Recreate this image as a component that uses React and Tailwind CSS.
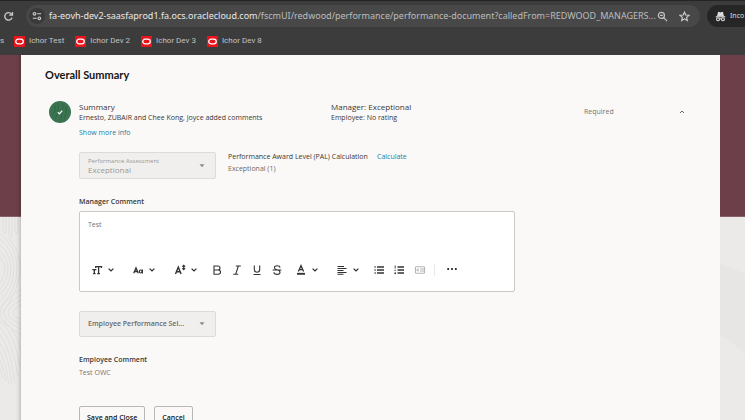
import React from "react";

const bookmarks = ["Ichor Test", "Ichor Dev 2", "Ichor Dev 3", "Ichor Dev 8"];

function OracleMark() {
  return (
    <svg viewBox="0 0 10 10" className="size-[11px]" aria-hidden="true">
      <rect width="10" height="10" fill="#e8141c" />
      <rect x="1.6" y="2.9" width="6.8" height="4.2" rx="2.1" fill="none" stroke="#fff" strokeWidth="1.2" />
    </svg>
  );
}

function BrowserBar() {
  return (
    <header className="shrink-0 bg-[#3c3c3c] border-t border-[#242424] h-[55px] overflow-hidden">
      <div className="flex items-center pt-1 h-[26px] font-['Noto_Sans','Open_Sans',sans-serif]">
        <button aria-label="Reload" className="ml-[3px] mr-3 size-[11px] shrink-0">
          <svg viewBox="0 0 12 12" className="size-[11px]" fill="none" stroke="#c9c9c9" strokeWidth="1.5">
            <path d="M9.9 7.2A4.1 4.1 0 1 1 9.3 3.4" />
            <path d="M10.3 1v3.4H6.9" />
          </svg>
        </button>
        <div className="flex h-[22px] flex-1 min-w-0 items-center rounded-full bg-[#484848] pl-[3px] pr-[10px]">
          <button aria-label="Site information" className="flex size-4 shrink-0 items-center justify-center rounded-full bg-[#3a3a3a]">
            <svg viewBox="0 0 12 12" className="size-[10px]" fill="none" stroke="#d0d0d0" strokeWidth="1.3">
              <circle cx="3" cy="3.3" r="1.6" />
              <path d="M6.2 3.3H11M1 8.7h4.6" />
              <circle cx="8.8" cy="8.7" r="1.6" />
            </svg>
          </button>
          <p className="ml-1 flex-1 min-w-0 whitespace-nowrap text-[9px] leading-4 text-[#bdbdbd]">
            <span className="text-[#e8e8e8]">fa-eovh-dev2-saasfaprod1.fa.ocs.oraclecloud.com</span>
            /fscmUI/redwood/performance/performance-document?calledFrom=REDWOOD_MANAGERS...
          </p>
          <button aria-label="Zoom" className="ml-2 shrink-0">
            <svg viewBox="0 0 12 12" className="size-[11px] block" fill="none" stroke="#c4c4c4" strokeWidth="1.3">
              <circle cx="4.8" cy="4.8" r="3.3" />
              <path d="M7.3 7.3l3.7 3.7M3.3 4.8h3" />
            </svg>
          </button>
          <button aria-label="Bookmark this page" className="ml-[11px] shrink-0">
            <svg viewBox="0 0 12 12" className="size-[11px] block" fill="none" stroke="#d0d0d0" strokeWidth="1.2">
              <path d="M6 1.2l1.4 3.2 3.5.3-2.6 2.3.8 3.4L6 8.6l-3.1 1.8.8-3.4L1.1 4.7l3.5-.3z" />
            </svg>
          </button>
        </div>
        <button className="ml-[7px] flex h-[22px] w-[38px] shrink-0 items-center gap-1 rounded-l-full bg-[#262626] pl-2 text-[7px] text-[#dedede]">
          <svg viewBox="0 0 12 12" className="size-[11px] shrink-0" fill="none" stroke="#e0e0e0" strokeWidth="1.2">
            <path d="M3 5.2l.8-3.6 2.2.5 2.2-.5.8 3.6z" fill="#e0e0e0" />
            <path d="M.8 6.3h10.4" />
            <circle cx="3.3" cy="9" r="1.6" />
            <circle cx="8.7" cy="9" r="1.6" />
            <path d="M4.9 8.8q1.1-.7 2.2 0" />
          </svg>
          Inco
        </button>
      </div>
      <nav className="flex h-[28px] items-center gap-[11px] font-['Roboto','Open_Sans',sans-serif] text-[8px] text-[#c2c2c2]">
        <span className="w-[3px]">s</span>
        {bookmarks.map((b) => (
          <a key={b} href="#" className="flex items-center gap-1 whitespace-nowrap">
            <OracleMark />
            {b}
          </a>
        ))}
      </nav>
    </header>
  );
}

function Side({ children }) {
  return (
    <div className="flex flex-col">
      <div className="h-[162px] border-b border-[#8a6169] bg-[#6d3f49]" />
      <div className="flex-1 bg-[#ebeae8]">{children}</div>
    </div>
  );
}

function Chevron() {
  return (
    <svg viewBox="0 0 6 4" className="h-1 w-[6px]" fill="none" stroke="#2c2c2c" strokeWidth="1.2">
      <path d="M.6.6L3 3 5.4.6" />
    </svg>
  );
}

function Tool({ label, menu, className = "", children }) {
  return (
    <button aria-label={label} className={"flex items-center gap-[5px] " + className}>
      <svg viewBox="0 0 12 12" className="size-3" fill="none" stroke="#333" strokeWidth="1.1">
        {children}
      </svg>
      {menu && <Chevron />}
    </button>
  );
}

function Toolbar() {
  return (
    <div role="toolbar" aria-label="Formatting" className="flex h-3 items-center pl-[11px]">
      <Tool label="Font size" menu>
        <path d="M4.400 2.600h6.400M7.600 2.600v7.200M6.200 9.700H9M4.700 2v2M10.500 2v2" strokeWidth="1.300" />
        <path d="M1.300 5.700h4M3.300 5.700v4M2.100 9.700h2.400" strokeWidth="1.300" />
      </Tool>
      <Tool label="Font" menu className="ml-[18px]">
        <path d="M1.700 9.300L4 3.900l2.300 5.400M2.600 7.500h2.800" strokeWidth="1.300" />
        <ellipse cx="8.700" cy="7.500" rx="1.400" ry="1.500" strokeWidth="1.200" />
        <path d="M10.400 5.600v3.800" strokeWidth="1.200" />
      </Tool>
      <Tool label="Superscript and subscript" menu className="ml-[19px]">
        <path d="M1.500 10L4.300 3.200 7.100 10M2.400 7.700h3.800" strokeWidth="1.400" />
        <path d="M9.700 1.200v4.400M8.300 2.600l1.400-1.400 1.400 1.400M8.300 4.200l1.400 1.400 1.400-1.400" />
      </Tool>
      <Tool label="Bold" className="ml-[14px]">
        <path d="M3 2h4a2 2 0 0 1 0 4H3zM3 6h4.400a2.100 2.100 0 0 1 0 4.200H3z" />
      </Tool>
      <Tool label="Italic" className="ml-2">
        <path d="M4.800 2h5M2.200 10.200h5M7.400 2L4.700 10.200" />
      </Tool>
      <Tool label="Underline" className="ml-2">
        <path d="M3.300 1.500v4a2.700 2.700 0 0 0 5.400 0v-4M2.500 10.500h7" />
      </Tool>
      <Tool label="Strikethrough" className="ml-2">
        <path d="M9 3.600C8.700 1.200 3.300 1.200 3.400 3.700c.1 1.300 1.300 1.700 2.600 2 1.600.4 3 .9 3 2.500 0 2.900-5.800 2.900-6.100 0M1.600 6h8.800" />
      </Tool>
      <Tool label="Text colour" menu className="ml-3">
        <path d="M3.400 7.500L6 1.700l2.600 5.800M4.300 5.700h3.400" strokeWidth="1.300" />
        <path d="M2 9.800h8" strokeWidth="1.900" />
      </Tool>
      <Tool label="Align" menu className="ml-[18px]">
        <path d="M1.500 2.500h6.500M1.500 4.500h9M1.500 6.500h6M1.500 8.500h9M1.500 10.300h6" />
      </Tool>
      <Tool label="Bulleted list" className="ml-[14px]">
        <path d="M1.500 3h1.200M4 3h7M1.500 6h1.200M4 6h7M1.500 9h1.200M4 9h7" strokeWidth="1.300" />
      </Tool>
      <Tool label="Numbered list" className="ml-2">
        <path d="M4.500 3H11M4.500 6H11M4.500 9H11" strokeWidth="1.300" />
        <path d="M2.200 1.500v3M1.400 6.300h1.500M1.400 9.500h1.500M2.200 8v2.200" strokeWidth=".9" />
      </Tool>
      <Tool label="Decrease indent" className="ml-[9px]">
        <path d="M1.500 2.800h9M6 5h4.500M6 7h4.500M1.500 9.200h9M1.500 2.800v6.400M10.500 2.800v6.400M4.800 4.600L3 6l1.800 1.400" stroke="#b5b5b5" />
      </Tool>
      <span className="ml-2 h-3 w-px bg-[#e8e8e8]" />
      <Tool label="More" className="ml-[11px]">
        <path d="M1.300 5h1.800M5.100 5h1.800M8.900 5h1.800" strokeWidth="1.800" />
      </Tool>
    </div>
  );
}

function Caret() {
  return (
    <svg viewBox="0 0 6 4" className="h-1 w-[6px] shrink-0" aria-hidden="true">
      <path d="M.5.3h5L3 3.300z" fill="#8a8a8a" />
    </svg>
  );
}

function Panel() {
  return (
    <main className="flex-1 min-w-0 bg-[#fbf9f8] px-6 pt-3 shadow-[0_0_5px_rgba(0,0,0,0.35)] text-[7px] leading-[10px] text-[#3a3734]">
      <h1 className="font-['Lato','Open_Sans',sans-serif] text-[11px] leading-4 font-bold text-[#161513]">Overall Summary</h1>

      <section className="mt-[18px] flex items-center pl-1">
        <span className="flex size-[22px] items-center justify-center rounded-full bg-[#3a7450]">
          <svg viewBox="0 0 22 22" className="size-[22px]" fill="none">
            <path d="M3 15Q7 10 6 4M6 18Q10 12 9 2M11 20Q14 13 14 2M15 19Q18 12 17 5" stroke="#2f6343" strokeWidth=".8" />
            <path d="M8.800 11.200l1.600 1.600 2.900-3.200" stroke="#fff" strokeWidth="1.200" />
          </svg>
        </span>
        <div className="ml-2 w-[252px]">
          <h2 className="text-[8px] leading-3">Summary</h2>
          <p>Ernesto, ZUBAIR and Chee Kong, Joyce added comments</p>
        </div>
        <div className="flex-1">
          <p className="text-[8px] leading-3">Manager: Exceptional</p>
          <p>Employee: No rating</p>
        </div>
        <span className="w-[95px] text-[#77736f]">Required</span>
        <button aria-label="Collapse" className="mr-[11px]">
          <svg viewBox="0 0 6 4" className="block h-1 w-[6px]" fill="none" stroke="#6b6865">
            <path d="M1 3l2-2 2 2" />
          </svg>
        </button>
      </section>

      <div className="pl-[34px]">
        <a href="#" className="mt-[5px] block w-fit text-[#227e9e]">Show more info</a>

        <div className="mt-[14px] flex">
          <div className="flex h-[27px] w-[137px] items-center rounded-[2px] border border-[#dddbd9] bg-[#f0efed] pl-2 pr-[10px] text-[#9b9895]">
            <div className="flex-1">
              <label htmlFor="assessment" className="block text-[6px] leading-2">Performance Assessment</label>
              <select id="assessment" disabled className="block h-[9px] w-full appearance-none text-[8px] leading-[9px] opacity-100">
                <option>Exceptional</option>
              </select>
            </div>
            <Caret />
          </div>
          <div className="ml-3 w-[149px]">
            <p>Performance Award Level (PAL) Calculation</p>
            <p className="mt-[2px] text-[#6b6865]">Exceptional (1)</p>
          </div>
          <a href="#" className="h-fit text-[#227e9e]">Calculate</a>
        </div>

        <label htmlFor="comment" className="mt-[18px] block font-semibold">Manager Comment</label>
        <div className="mt-1 h-[81px] w-[436px] rounded-[2px] border border-[#cbc9c7] bg-white pt-2">
          <textarea id="comment" defaultValue="Test" className="block h-[44px] w-full resize-none px-2 text-[#77736f]" />
          <Toolbar />
        </div>

        <div className="mt-[19px] flex h-[26px] w-[137px] items-center rounded-[2px] border border-[#dddbd9] bg-[#f0efed] pl-2 pr-[10px] text-[#6b6865]">
          <select aria-label="Employee Performance Selection" disabled className="flex-1 appearance-none font-semibold opacity-100">
            <option>Employee Performance Sel...</option>
          </select>
          <Caret />
        </div>

        <h3 className="mt-[18px] font-semibold">Employee Comment</h3>
        <p className="mt-[3px] text-[#77736f]">Test OWC</p>

        <div className="mt-[28px] flex gap-[9px] font-semibold text-[#161513]">
          <button className="h-[23px] rounded-[2px] border border-[#b9b7b5] px-[7px]">Save and Close</button>
          <button className="h-[23px] rounded-[2px] border border-[#b9b7b5] px-[7px]">Cancel</button>
        </div>
      </div>
    </main>
  );
}

export default function App() {
  return (
    <div className="flex h-screen flex-col overflow-hidden font-['Open_Sans','Noto_Sans',sans-serif]">
      <BrowserBar />
      <div className="grid min-h-0 flex-1 grid-cols-[21px_1fr_25px] overflow-hidden">
        <Side>
          <svg viewBox="0 0 21 176" className="h-[176px] w-[21px]" fill="none" stroke="#dedcda" strokeWidth=".8">
            <path d="M3 0v14q2 6 3 0V0M9 0v18q2 5 3 0V0M15 0v14q2 6 3 0V0" />
            <path d="M0 22Q14 34 14 52T0 84M0 28Q11 38 11 52T0 78M0 34Q8 42 8 52T0 72M0 40Q5 46 5 52T0 66M0 16Q17 30 17 52T0 90M8 20Q21 34 20 54T2 96" />
            <path d="M21 78Q4 88 4 96T21 112M21 83Q8 90 8 96T21 107M21 88Q13 92 13 96T21 102M21 72Q0 86 0 96T21 118" />
            <path d="M0 104Q15 116 20 150M0 110Q13 124 18 160M0 118Q11 132 15 166M0 126Q9 140 12 168M0 134Q6 148 9 167M0 143Q4 154 6 164M0 152L3 162M4 104Q18 116 21 134" />
          </svg>
        </Side>
        <Panel />
        <Side>
          <svg viewBox="0 0 25 204" className="h-[204px] w-[25px]">
            <path d="M0 46l25 11v79L0 117z" fill="#e7e6e4" />
          </svg>
        </Side>
      </div>
    </div>
  );
}
